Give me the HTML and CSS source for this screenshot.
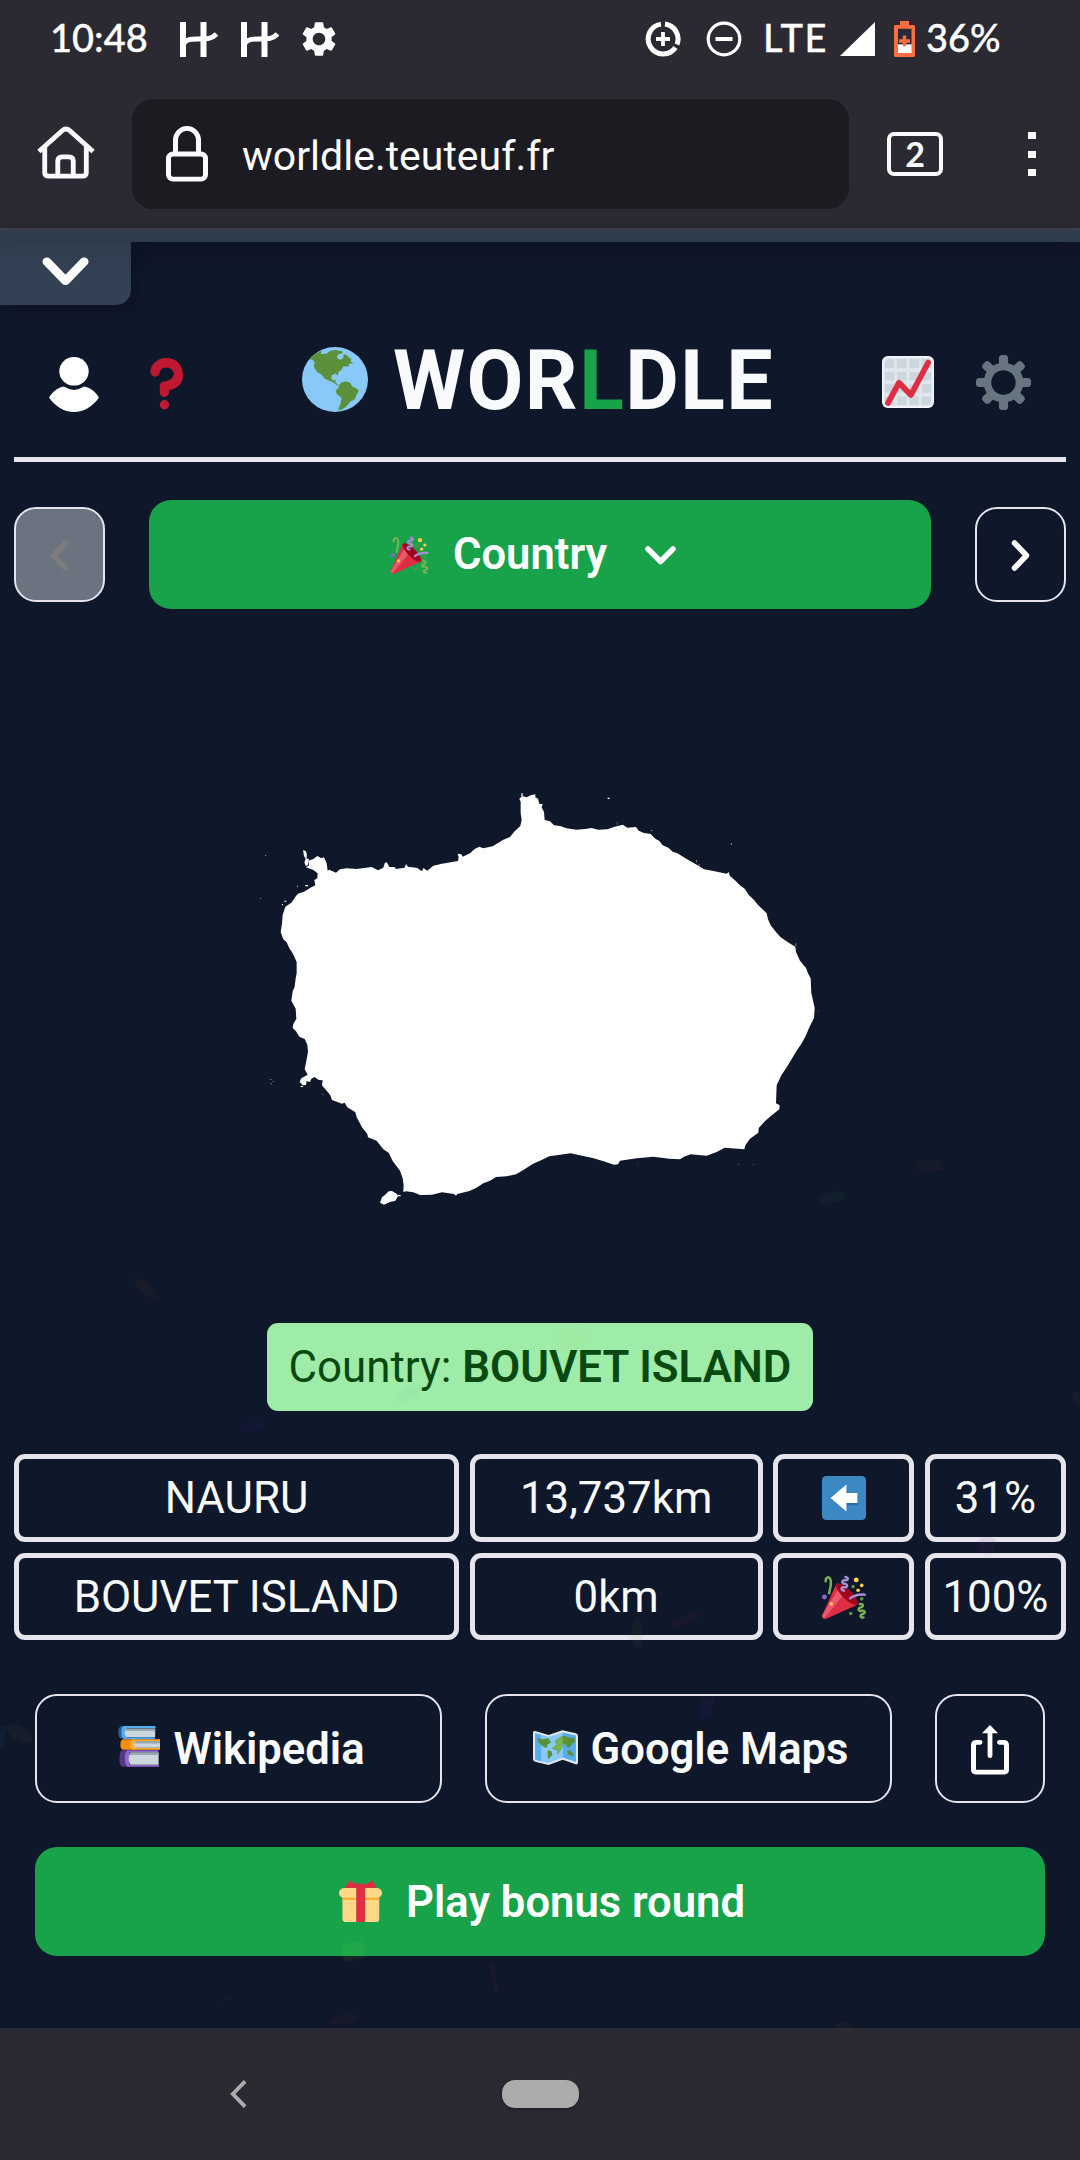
FILE: index.html
```html
<!DOCTYPE html>
<html lang="en">
<head>
<meta charset="utf-8">
<title>Worldle</title>
<link rel="stylesheet" href="styles.css">
</head>
<body>
<svg class="defs" aria-hidden="true">
  <symbol id="party" viewBox="0 0 36 36">
    <path fill="#DD2E44" d="M11.626 7.488c-.112.112-.197.247-.268.395l-.008-.008L.134 33.141l.011.011c-.208.403.14 1.223.853 1.937.713.713 1.533 1.061 1.936.853l.01.01L28.21 24.735l-.008-.009c.147-.07.282-.155.395-.269 1.562-1.562-.971-6.627-5.656-11.313-4.687-4.686-9.752-7.218-11.315-5.656z"/>
    <path fill="#EA596E" d="M13 12L.416 32.506l-.282.635.011.011c-.208.403.14 1.223.853 1.937.232.232.473.408.709.557L17 17l-4-5z"/>
    <path fill="#A0041E" d="M23.012 13.066c4.67 4.672 7.263 9.652 5.789 11.124-1.473 1.474-6.453-1.118-11.126-5.788-4.671-4.672-7.263-9.654-5.79-11.127 1.474-1.473 6.454 1.119 11.127 5.791z"/>
    <path fill="#AA8DD8" d="M18.59 13.609c-.199.161-.459.245-.734.215-.868-.094-1.598-.396-2.109-.873-.541-.505-.808-1.183-.735-1.862.128-1.192 1.324-2.286 3.363-2.066.793.085 1.147-.17 1.159-.292.014-.121-.277-.446-1.07-.532-.868-.094-1.598-.396-2.11-.873-.541-.505-.809-1.183-.735-1.862.13-1.192 1.325-2.286 3.362-2.065.578.062.883-.057 1.012-.134.103-.063.144-.123.148-.158.012-.121-.275-.446-1.07-.532-.549-.06-.947-.552-.886-1.102.059-.549.55-.946 1.101-.886 2.037.219 2.973 1.542 2.844 2.735-.13 1.194-1.325 2.286-3.364 2.067-.578-.063-.88.057-1.01.134-.103.062-.145.123-.149.157-.013.122.276.446 1.071.532 2.037.22 2.973 1.542 2.844 2.735-.129 1.192-1.324 2.286-3.362 2.065-.578-.062-.882.058-1.012.134-.104.064-.144.124-.148.158-.013.121.276.446 1.07.532.548.06.947.553.886 1.102-.028.274-.167.511-.366.671z"/>
    <path fill="#77B255" d="M30.661 22.857c1.973-.557 3.334.323 3.658 1.478.324 1.154-.378 2.615-2.35 3.17-.77.216-1.001.584-.97.701.034.118.425.312 1.193.095 1.972-.555 3.333.325 3.657 1.479.326 1.155-.378 2.614-2.351 3.17-.769.216-1.001.585-.967.702.033.117.423.311 1.192.095.53-.149 1.084.16 1.233.691.148.532-.161 1.084-.693 1.234-1.971.555-3.333-.323-3.659-1.479-.324-1.154.379-2.613 2.353-3.169.77-.217 1.001-.584.967-.702-.032-.117-.422-.312-1.19-.096-1.974.556-3.334-.322-3.659-1.479-.325-1.154.378-2.613 2.351-3.17.768-.215.999-.585.967-.701-.034-.118-.423-.312-1.192-.096-.532.15-1.083-.16-1.233-.691-.149-.53.161-1.082.693-1.232z"/>
    <path fill="#AA8DD8" d="M23.001 20.16c-.294 0-.584-.129-.782-.375-.345-.432-.274-1.061.156-1.406.218-.175 5.418-4.259 12.767-3.208.547.078.927.584.849 1.131-.078.546-.58.93-1.132.848-6.493-.922-11.187 2.754-11.233 2.791-.186.148-.406.219-.625.219z"/>
    <path fill="#77B255" d="M5.754 16c-.095 0-.192-.014-.288-.042-.529-.159-.829-.716-.67-1.245 1.133-3.773 2.16-9.794.898-11.364-.141-.178-.354-.353-.842-.316-.938.072-.849 2.051-.848 2.071.042.551-.372 1.031-.922 1.072-.559.034-1.031-.372-1.072-.923-.103-1.379.326-4.035 2.692-4.214 1.056-.08 1.933.287 2.552 1.057 2.371 2.951-.036 11.506-.542 13.192-.13.433-.528.712-.958.712z"/>
    <circle fill="#5C913B" cx="25.5" cy="9.5" r="1.5"/><circle fill="#9266CC" cx="2" cy="18" r="2"/><circle fill="#5C913B" cx="32.5" cy="19.5" r="1.5"/><circle fill="#5C913B" cx="23.5" cy="31.5" r="1.5"/><circle fill="#FFCC4D" cx="28" cy="4" r="2"/><circle fill="#FFCC4D" cx="32.5" cy="8.5" r="1.5"/><circle fill="#FFCC4D" cx="29.5" cy="12.5" r="1.5"/><circle fill="#FFCC4D" cx="7.5" cy="23.5" r="1.5"/>
  </symbol>
  <symbol id="letter-mark" viewBox="0 0 38 35">
    <path d="M3 0V35M23.500 0V35" fill="none" stroke="#fff" stroke-width="6"/>
    <path d="M3 24C4 18 9 17 18 17C27 17 32 17 36.500 12" fill="none" stroke="#fff" stroke-width="5"/>
  </symbol>
</svg>

<div class="status">
  <div class="status-left">
    <span class="clock">10:48</span>
    <svg class="mark" width="38" height="35"><use href="#letter-mark"/></svg>
    <svg class="mark" width="38" height="35"><use href="#letter-mark"/></svg>
    <svg class="cog" width="42" height="42" viewBox="0 0 24 24"><path fill="#fff" d="M19.140 12.940c.04-.3.06-.61.06-.94 0-.32-.02-.64-.07-.94l2.030-1.580c.18-.14.23-.41.12-.61l-1.920-3.320c-.12-.22-.37-.29-.59-.22l-2.390.96c-.5-.38-1.030-.7-1.620-.94l-.36-2.540c-.04-.24-.24-.41-.48-.41h-3.840c-.24 0-.43.17-.47.41l-.36 2.540c-.59.24-1.130.57-1.620.94l-2.390-.96c-.22-.08-.47 0-.59.22L2.740 8.870c-.12.21-.08.47.12.61l2.030 1.580c-.05.3-.09.63-.09.94s.02.64.07.94l-2.030 1.580c-.18.14-.23.41-.12.61l1.920 3.320c.12.22.37.29.59.22l2.390-.96c.5.38 1.030.7 1.620.94l.36 2.540c.05.24.24.41.48.41h3.840c.24 0 .44-.17.47-.41l.36-2.540c.59-.24 1.130-.56 1.620-.94l2.390.96c.22.08.47 0 .59-.22l1.920-3.320c.12-.22.07-.47-.12-.61l-2.010-1.580zM12 15.600c-1.980 0-3.600-1.620-3.600-3.600s1.620-3.600 3.600-3.600 3.600 1.620 3.600 3.600-1.620 3.600-3.600 3.600z"/></svg>
  </div>
  <div class="status-right">
    <svg class="saver" width="36" height="36" viewBox="0 0 36 36" fill="none" stroke="#fff"><path stroke-width="5" d="M16 3.100A15 15 0 1 0 30.500 26.500M20 3.100A15 15 0 0 1 32 23.500"/><path stroke-width="3.800" d="M18 11v14M11 18h14"/></svg>
    <svg class="dnd" width="36" height="36" viewBox="0 0 36 36" fill="none" stroke="#fff"><circle cx="18" cy="18" r="15.800" stroke-width="3.200"/><path stroke-width="4" d="M9.500 18h17"/></svg>
    <span class="lte">LTE</span>
    <svg class="signal" width="35" height="34" viewBox="0 0 35 34"><path fill="#fff" d="M35 0V34H0z"/></svg>
    <svg class="battery" width="21" height="36" viewBox="0 0 21 37" preserveAspectRatio="none"><path fill="#fff" d="M3 24h15v10H3z"/><path fill="#ff6e40" fill-rule="evenodd" d="M6 0h9v4h4.500a1.500 1.500 0 0 1 1.500 1.500v30a1.500 1.500 0 0 1-1.500 1.500h-18A1.500 1.500 0 0 1 0 35.500v-30A1.500 1.500 0 0 1 1.500 4H6zM4 8v25h13.500V8z"/><path stroke="#ff6e40" stroke-width="3.500" d="M10.500 15v11M5 20.500h11"/></svg>
    <span class="percent">36%</span>
  </div>
</div>

<div class="toolbar">
  <svg class="home" width="58" height="53" viewBox="0 0 60 56" preserveAspectRatio="none" fill="none" stroke="#fbfbfe" stroke-width="5"><path d="M2 27L26 5Q30 1.500 34 5L58 27"/><path d="M8 22V49Q8 53 12 53H47Q51 53 51 49V22"/><path d="M21.500 53V37Q21.500 32.500 26 32.500H33Q37.500 32.500 37.500 37V53"/></svg>
  <div class="url">
    <svg width="42" height="56" viewBox="0 0 42 58" preserveAspectRatio="none" fill="none" stroke="#fbfbfe" stroke-width="5"><rect x="2.500" y="29" width="37" height="26" rx="4.500"/><path d="M9.500 29V15A11.500 12.500 0 0 1 32.500 15V29"/></svg>
    <span>worldle.teuteuf.fr</span>
  </div>
  <div class="tabs">2</div>
  <div class="menu"><i></i><i></i><i></i></div>
</div>

<main class="page">
  <div class="ribbon"></div>
  <div class="drawer">
    <svg width="47" height="29" viewBox="0 0 48 31" preserveAspectRatio="none" fill="none" stroke="#fff" stroke-width="9" stroke-linecap="round" stroke-linejoin="round"><path d="M5 5L24 25.500L43 5"/></svg>
  </div>

  <header class="header">
    <svg class="user" width="50" height="55" viewBox="0 0 50 57" preserveAspectRatio="none" fill="#fff"><ellipse cx="25" cy="14.800" rx="14.700" ry="14.800"/><path d="M15 30.700Q25 37.500 35 30.700C41 31.500 46 36 50 42C43 52 35 57 25 57S7 52 0 42C4 36 9 31.500 15 30.700z"/></svg>
    <svg class="help" width="56" height="56" viewBox="0 0 36 36" fill="#BE1931"><path d="M17 27c-1.657 0-3-1.343-3-3v-4c0-1.657 1.343-3 3-3 .603-.006 6-1 6-5 0-2-2-4-5-4-2.441 0-4 2-4 3 0 1.657-1.343 3-3 3s-3-1.343-3-3c0-4.878 4.580-9 10-9 8 0 11 5.982 11 11 0 4.145-2.277 7.313-6.413 8.920-.9.351-1.790.587-2.587.747V24c0 1.657-1.343 3-3 3z"/><circle cx="17" cy="32" r="3"/></svg>
    <svg class="globe" width="66" height="65" viewBox="880 80 190 196" preserveAspectRatio="none"><ellipse cx="975" cy="178" rx="95" ry="98" fill="#88C9F9"/><g fill="#5C913B"><path d="M898 121L914 103L936 91L934 101L950 100L962 91L975 89L996 93L996 98L983 103Q978 112 986 117Q996 120 999 112L1000 101L1008 104L1015 112L1022 116L1020 124L1028 129L1012 131L1017 138L999 139L993 149L986 154L983 166L976 160L966 165L964 175L970 181L977 179L976 187L986 195L980 195L971 187L957 181L945 175L937 164L925 157L917 146L914 137L917 127L911 119L905 117z"/><path d="M986 195L994 187L1006 184L1018 187L1024 198L1037 205L1044 212L1038 222L1033 237L1018 246L1007 260L993 270L984 269L991 250L994 234L980 222L977 211L985 202z"/></g></svg>
    <h1>WOR<span>L</span>DLE</h1>
    <svg class="chart" width="52" height="52" viewBox="0 0 36 36"><rect width="36" height="36" rx="4" fill="#F5F8FA"/><rect x="1" y="1" width="34" height="34" rx="3" fill="#E1E8ED"/><g fill="#CCD6DD"><path d="M5 2h3.500v6.500H2V5a3 3 0 0 1 3-3zM10.500 2h6.500v6.500h-6.500zM19 2h6.500v6.500H19zM27.500 2H31a3 3 0 0 1 3 3v3.500h-6.500zM2 11h6.500v6H2zM10.500 11h6.500v6h-6.500zM19 11h6.500v6H19zM27.500 11H34v6h-6.500zM2 19.500h6.500v6H2zM10.500 19.500h6.500v6h-6.500zM19 19.500h6.500v6H19zM27.500 19.500H34v6h-6.500zM2 28h6.500v6H5a3 3 0 0 1-3-3zM10.500 28h6.500v6h-6.500zM19 28h6.500v6H19zM27.500 28H34v3a3 3 0 0 1-3 3h-3.500z"/></g><path d="M4.200 32.500L11.800 18.500L20 27L32 4.500" fill="none" stroke="#DD2E44" stroke-width="4" stroke-linecap="round" stroke-linejoin="round"/></svg>
    <svg class="settings" width="55" height="55" viewBox="0 0 36 36"><path fill="#66757F" d="M34 15h-3.362c-.324-1.369-.864-2.651-1.582-3.814l2.379-2.379c.781-.781.781-2.048 0-2.829l-1.414-1.414c-.781-.781-2.047-.781-2.828 0l-2.379 2.379C23.650 6.225 22.369 5.686 21 5.362V2c0-1.104-.896-2-2-2h-2c-1.104 0-2 .896-2 2v3.362c-1.369.324-2.651.864-3.814 1.582L8.808 4.565c-.781-.781-2.048-.781-2.828 0L4.565 5.979c-.781.781-.781 2.048-.001 2.829l2.379 2.379C6.225 12.350 5.686 13.632 5.362 15H2c-1.104 0-2 .896-2 2v2c0 1.104.896 2 2 2h3.362c.324 1.368.864 2.650 1.582 3.813l-2.379 2.379c-.78.78-.78 2.048.001 2.829l1.414 1.414c.78.78 2.047.78 2.828 0l2.379-2.379c1.163.719 2.445 1.258 3.814 1.582V34c0 1.104.896 2 2 2h2c1.104 0 2-.896 2-2v-3.362c1.368-.324 2.650-.864 3.813-1.582l2.379 2.379c.781.781 2.047.781 2.828 0l1.414-1.414c.781-.781.781-2.048 0-2.829l-2.379-2.379c.719-1.163 1.258-2.445 1.582-3.814H34c1.104 0 2-.896 2-2v-2C36 15.896 35.104 15 34 15zM18 26c-4.418 0-8-3.582-8-8s3.582-8 8-8 8 3.582 8 8-3.582 8-8 8z"/></svg>
  </header>

  <nav class="rounds">
    <button class="step disabled"><svg width="19" height="31" viewBox="0 0 19 31" fill="none" stroke="#7c7c7c" stroke-width="5.500" stroke-linecap="round" stroke-linejoin="round"><path d="M15.500 3L3.500 15.500L15.500 28"/></svg></button>
    <button class="current"><svg width="39" height="38"><use href="#party"/></svg><span>Country</span><svg class="caret" width="31" height="19" viewBox="0 0 31 19" fill="none" stroke="#fff" stroke-width="5.500" stroke-linecap="round" stroke-linejoin="round"><path d="M3 3L15.500 15.500L28 3"/></svg></button>
    <button class="step"><svg width="19" height="31" viewBox="0 0 19 31" fill="none" stroke="#fff" stroke-width="5.500" stroke-linecap="round" stroke-linejoin="round"><path d="M3.500 3L15.500 15.500L3.500 28"/></svg></button>
  </nav>

  <svg class="island" width="600" height="460" viewBox="0 0 1800 1380" fill="#fff">
    <path d="M838 86L846 78L860 82L872 76L886 73L886 82L894 86L898 102L908 102L905 112L912 126L914 150L930 154L942 166L960 168L980 175L1010 179L1035 177L1055 174L1075 179L1102 178L1122 171L1148 164L1162 173L1188 171L1196 182L1212 189L1232 192L1246 206L1258 213L1268 226L1286 234L1298 245L1312 250L1340 267L1370 284L1392 298L1420 303L1460 311L1466 306L1470 318L1488 334L1498 344L1514 356L1526 374L1542 390L1554 405L1580 430L1584 448L1592 466L1606 484L1622 502L1646 518L1666 530L1668 546L1680 572L1698 594L1704 610L1712 625L1714 670L1724 713L1722 744L1708 772L1698 796L1686 818L1668 845L1644 886L1624 916L1610 946L1608 1000L1619 1006L1618 1018L1600 1032L1576 1052L1556 1074L1555 1088L1530 1106L1516 1126L1513 1138L1454 1133L1430 1146L1400 1157L1352 1153L1332 1160L1320 1168L1288 1166L1240 1160L1190 1165L1140 1172L1134 1183L1122 1184L1086 1172L1058 1164L1030 1158L992 1150L960 1154L928 1159L900 1172L878 1182L850 1200L828 1213L800 1219L768 1221L750 1232L730 1240L708 1254L688 1263L652 1272L648 1277L642 1272L606 1267L576 1274L540 1275L520 1267L498 1264L490 1266L491 1245L488 1225L480 1202L458 1173L446 1148L430 1138L410 1112L384 1102L382 1092L366 1072L350 1042L346 1027L322 1012L314 998L306 1001L276 990L270 974L256 958L246 946L248 931L236 930L224 921L214 926L210 936L200 933L198 945L188 946L179 935L184 925L203 914L194 898L200 868L204 845L202 824L194 807L178 800L168 784L158 774L160 762L169 746L167 716L154 692L158 664L164 650L167 625L170 610L170 576L158 550L148 535L140 517L130 508L122 486L126 460L128 435L136 410L154 398L168 378L174 371L192 365L214 352L226 346L223 330L232 325L233 310L220 300L198 292L207 286L205 272L220 267L232 258L244 265L252 262L260 280L263 302L268 299L288 308L300 298L320 295L350 297L395 291L414 301L430 293L434 280L440 276L448 291L464 291L468 297L494 293L498 282L504 290L532 294L546 304L550 294L562 302L580 287L606 281L654 273L656 262L653 251L664 253L668 260L690 250L704 237L718 230L730 235L758 229L790 209L810 201L824 184L841 168L845 150L842 130L842 95z"/>
    <path d="M189 241L196 242L200 249L200 266L207 266L203 286L198 288L193 278L197 266L192 258zM420 1298L426 1282L438 1272L446 1264L456 1263L472 1273L474 1279L466 1292L450 1296L432 1304zM474 1275h8v4h-8zM844 70h4v8h-4zM182 948h7v3h-7zM133 392h6v3h-6zM126 402h3v4h-3zM196 345h8v4h-8zM1103 83h6v4h-6z"/>
    <path opacity=".5" d="M75 255h3v3h-3zM60 384h3v3h-3zM90 928h5v2h-5zM97 933h4v2h-4zM92 940h4v3h-4zM171 346h3v6h-3zM248 971h3v3h-3zM1472 220h4v4h-4zM1233 180h4v4h-4zM1368 271h3v6h-3zM1376 282h3v5h-3zM1666 520h3v8h-3z"/>
    <path opacity=".3" d="M1130 155h3v9h-3zM1733 722h3v3h-3zM1494 1182h3v3h-3zM1539 1182h3v3h-3zM1192 1179h2v3h-2z"/>
  </svg>

  <p class="answer">Country: <b>BOUVET ISLAND</b></p>

  <div class="guesses">
    <div>NAURU</div><div>13,737km</div>
    <div><svg width="44" height="44" viewBox="0 0 36 36"><rect width="36" height="36" rx="3.500" fill="#3B88C3"/><path fill="#2b6ea3" d="M20 8v20l1-4h8.500V14H21z"/><path fill="#fff" d="M20 7v7h9v8h-9v7L7 18z"/></svg></div>
    <div>31%</div>
    <div>BOUVET ISLAND</div><div>0km</div>
    <div><svg width="44" height="44"><use href="#party"/></svg></div>
    <div class="full">100%</div>
  </div>

  <div class="links">
    <button class="outline wiki"><svg width="42" height="41" viewBox="0 0 122 124" preserveAspectRatio="none"><path fill="#226699" d="M10 0H22V38H10Q1 36 1 19T10 0z"/><path fill="#55ACEE" d="M18 0H109V7H25V34H107V39H18Q10 37 10 19T18 0z"/><path fill="#CCD6DD" d="M24 8H108V33H24Q15 20 24 8z"/><path fill="#99AAB5" d="M24 8H108V15H22z"/><path fill="#F4900C" d="M14 40H50V72H14Q7 69 7 56T14 40z"/><path fill="#FFAC33" d="M43 40H122V47H50V66H122V72H43Q35 68 35 56T43 40z"/><path fill="#CCD6DD" d="M50 47H122V66H50Q42 56 50 47z"/><path fill="#99AAB5" d="M50 47H122V53H48z"/><path fill="#553788" d="M12 73H34V123H12Q4 119 4 98T12 73z"/><path fill="#9266CC" d="M27 73H117V79H33V118H119V123H28Q20 117 20 98T27 73z"/><path fill="#CCD6DD" d="M36 80H118V117H36Q26 98 36 80z"/><path fill="#99AAB5" d="M36 80H118V88H34z"/></svg><span>Wikipedia</span></button>
    <button class="outline maps"><svg width="45" height="35" viewBox="0 0 130 107" preserveAspectRatio="none"><path fill="#E1E8ED" d="M6 3L45 15L85 1L124 10Q130 12 130 18V99Q130 106 123 105L86 91L45 107L6 97Q0 95 0 89V8Q0 2 6 3z"/><path fill="#55ACEE" d="M6 9L25 15V96L6 91z"/><path fill="#88C9F9" d="M25 15L45 21V101L25 96zM45 21L86 8V84L45 101z"/><path fill="#55ACEE" d="M86 8L124 17V98L86 84z"/><path fill="#5C913B" d="M11 24L25 28L45 25L52 38L42 44L40 55L31 52L22 44L14 35zM44 61L54 66L56 76L47 87H43L42 68zM56 55L67 46L64 33L75 25L86 17L106 23L121 25V37L111 44L105 55L98 51L94 43L86 45L78 65L72 75L69 62L57 58zM98 65L106 61L117 73V81L101 75z"/><path fill="#77B255" d="M56 56L67 46L64 33L86 17V48L78 65L72 75L69 60z"/></svg><span>Google Maps</span></button>
    <button class="outline share"><svg width="38" height="50" viewBox="0 0 38 52" preserveAspectRatio="none"><path d="M9 18H5.500Q2.500 18 2.500 21V46.500Q2.500 49 5.500 49H32.500Q35.500 49 35.500 46.500V21Q35.500 18 32.500 18H28.500" fill="none" stroke="#fff" stroke-width="5" stroke-linecap="round"/><path d="M19 6V32" fill="none" stroke="#fff" stroke-width="4.800" stroke-linecap="round"/><path fill="#fff" d="M19 0L27 8.500H11z"/></svg></button>
  </div>
  <button class="bonus"><svg width="43" height="41" viewBox="0 0 125 123" preserveAspectRatio="none"><path fill="#FDD888" d="M10 48H117V113Q117 123 107 123H20Q10 123 10 113z"/><path fill="#FFAC33" d="M10 46H117V57H10z"/><path fill="#FDD888" d="M13 21H112Q125 24 125 36T112 50H13Q0 48 0 36T13 21z"/><path fill="#DD2E44" d="M50 8H76V123H50z"/><path fill="#DD2E44" d="M17 21L29 0Q34 -2 51 12Q62 6 75 12L95 0Q101 -1 109 21z"/></svg><span>Play bonus round</span></button>

  <svg class="confetti" width="1080" height="1797" viewBox="0 231 1080 1797">
    <path fill="#2e8a3a" fill-opacity=".07" d="M818 1195L843 1190L846 1200L821 1206z"/>
    <path fill="#a05a2a" fill-opacity=".06" d="M914 1161L939 1159L944 1170L919 1173z"/>
    <path fill="#a05a2a" fill-opacity=".07" d="M133 1278C147 1277 156 1287 159 1300C145 1299 137 1290 133 1278z"/>
    <ellipse cx="251" cy="1427" rx="14" ry="6" fill="#4a2ac8" fill-opacity=".06" transform="rotate(-10 251 1427)"/>
    <ellipse cx="410" cy="1393" rx="14" ry="6" fill="#50b4c8" fill-opacity=".07" transform="rotate(-28 410 1393)"/>
    <path fill="#e0b040" fill-opacity=".05" d="M559 1331L584 1329L583 1348L561 1351z"/>
    <path fill="#a0a030" fill-opacity=".06" d="M1070 1393L1080 1391V1409z"/>
    <ellipse cx="987" cy="1545" rx="9" ry="10" fill="#7a20a0" fill-opacity=".09"/>
    <path fill="#a03030" fill-opacity=".07" d="M673 1621L699 1611V1619L672 1629z"/>
    <ellipse cx="637" cy="1633" rx="6" ry="15" fill="#508c30" fill-opacity=".07"/>
    <path fill="#1478c8" fill-opacity=".09" d="M0 1727L6 1727L3 1747L0 1751z"/>
    <ellipse cx="20" cy="1734" rx="15" ry="7" fill="#a08030" fill-opacity=".06" transform="rotate(30 20 1734)"/>
    <path fill="#5a28c8" fill-opacity=".07" d="M702 1698L716 1696L711 1715L698 1721z"/>
    <path fill="#80e040" fill-opacity=".08" d="M341 1944L363 1941L365 1958L344 1962z"/>
    <path fill="#c03060" fill-opacity=".06" d="M489 1962L495 1966L499 1993L494 1990z"/>
    <path fill="#14a0c8" fill-opacity=".06" d="M210 2004L240 1992L226 2001z"/>
    <path fill="#c04040" fill-opacity=".06" d="M337 2015L360 2014L352 2024H327z"/>
    <path fill="#c06040" fill-opacity=".06" d="M832 2028Q843 2016 855 2028z"/>
  </svg>
</main>

<footer class="system">
  <svg width="17" height="28" viewBox="0 0 18 29" preserveAspectRatio="none" fill="none" stroke="#acacac" stroke-width="4"><path d="M16 1.500L3 14.500L16 27.500"/></svg>
  <i class="pill"></i>
</footer>
</body>
</html>
```
FILE: styles.css
```css
* { box-sizing: border-box; }
body {
  margin: 0;
  width: 1080px;
  height: 2160px;
  overflow: hidden;
  display: flex;
  flex-direction: column;
  background: #2b2a33;
  color: #f8fafc;
  font-family: Roboto, "Liberation Sans", sans-serif;
  font-size: 43.800px;
}
svg { display: block; flex: none; }
.defs { position: absolute; width: 0; height: 0; }
button {
  margin: 0;
  padding: 0;
  display: flex;
  align-items: center;
  justify-content: center;
  border: 0;
  border-radius: 22px;
  background: none;
  color: #fff;
  font: 600 43.600px/1 Roboto, "Liberation Sans", sans-serif;
  white-space: nowrap;
}

/* phone status bar */
.status {
  flex: none;
  height: 78px;
  padding: 0 80px 0 50px;
  display: flex;
  justify-content: space-between;
  color: #fff;
  font: 500 38px/74px Lato, "Liberation Sans", sans-serif;
  -webkit-text-stroke: .3px #fff;
}
.status-left, .status-right { height: 78px; display: flex; align-items: center; }
.status span { height: 78px; }
.clock { width: 130px; }
.mark { margin-right: 23px; }
.cog { margin-left: -4px; }
.saver { margin-right: 25px; }
.dnd { margin-right: 21px; }
.lte { width: 77px; letter-spacing: 1.500px; }
.signal { margin-right: 19px; }
.battery { margin-right: 11px; }
.percent { width: 74px; }

/* browser toolbar */
.toolbar {
  flex: none;
  height: 153px;
  padding: 21px 44px 0 37px;
  display: flex;
  align-items: flex-start;
  border-bottom: 3px solid #464450;
}
.home { margin: 27px 37px 0 0; }
.url {
  width: 717px;
  height: 110px;
  padding-left: 34px;
  display: flex;
  align-items: center;
  gap: 34px;
  border-radius: 21px;
  background: #1c1b22;
  color: #fbfbfe;
  font-size: 41px;
}
.url span { padding-top: 3px; }
.tabs {
  width: 56px;
  height: 44px;
  margin: 33px 0 0 38px;
  border: 4px solid #fbfbfe;
  border-radius: 7px;
  font: 700 34px/36px Lato, sans-serif;
  text-align: center;
}
.menu {
  height: 44px;
  margin: 33px 0 0 auto;
  display: flex;
  flex-direction: column;
  justify-content: space-between;
}
.menu i { width: 8px; height: 7px; background: #fbfbfe; }

/* game page */
.page {
  flex: none;
  position: relative;
  height: 1797px;
  display: flex;
  flex-direction: column;
  background: #0f172a;
}
.ribbon { height: 11px; background: #2f3c4d; box-shadow: 0 8px 20px #0e1022; }
.drawer {
  position: relative;
  width: 131px;
  height: 63px;
  display: flex;
  justify-content: center;
  padding-top: 15px;
  border-radius: 0 0 15px 0;
  background: linear-gradient(#2f3c4d, #334155 50%);
  box-shadow: 6px 8px 12px -2px #0e1226;
}
.header {
  height: 157px;
  margin: 0 14px;
  padding: 0 35px;
  display: flex;
  align-items: center;
  border-bottom: 5px solid #e5e5eb;
}
.user { margin: 7px 39px 0 0; }
.help { margin: 3px 108px 0 0; }
.globe { margin: -3px 25px 0 0; }
h1 {
  margin: 0;
  width: 490px;
  font-size: 82.500px;
  line-height: 1;
  font-weight: 700;
  letter-spacing: 1.400px;
}
h1 span { color: #16a34a; }
.chart { margin: 2px 42px 0 0; }
.settings { margin-top: 2px; }

.rounds {
  height: 109px;
  margin: 38px 14px 0;
  display: flex;
  align-items: center;
  justify-content: space-between;
}
.step { width: 91px; height: 95px; padding-top: 2px; border: 2px solid #e5e5eb; }
.disabled { background: #6b7280; }
.current { width: 782px; height: 109px; padding-right: 14px; background: #18a34a; }
.current span { margin-left: 24px; }
.caret { margin: 2px 0 0 38px; }

.island { margin: 161px 0 0 240px; }

.answer {
  width: 546px;
  height: 88px;
  margin: 93px auto 0;
  border-radius: 11px;
  background: #9eeca7;
  color: #0a4812;
  line-height: 88px;
  text-align: center;
  white-space: nowrap;
}
.answer b { font-weight: 600; }

.guesses {
  margin: 43px 14px 0;
  display: grid;
  grid-template-columns: 445px 293px 141px 141px;
  grid-template-rows: 88px 87px;
  gap: 11px 10.667px;
}
.guesses div {
  display: flex;
  align-items: center;
  justify-content: center;
  border: 5px solid #e5e5eb;
  border-radius: 11px;
  white-space: nowrap;
}

.links { margin: 54px 35px 0; display: flex; justify-content: space-between; }
.outline { width: 407px; height: 109px; border: 2px solid #e5e5eb; color: #f8fafc; }
.outline span { margin: 2px 0 0 13px; }
.wiki { padding-left: 6px; }
.wiki svg { margin-top: -4px; }
.maps { padding-left: 4px; }
.maps svg { margin-top: -2px; }
.share { width: 110px; padding-top: 2px; }
.bonus { height: 109px; margin: 44px 35px 0; padding-left: 4px; background: #18a34a; }
.bonus span { margin: 2px 0 0 24px; }

.confetti { position: absolute; left: 0; top: 0; filter: blur(1px); pointer-events: none; }

/* system navigation */
.system { flex: none; height: 132px; padding-left: 230px; display: flex; align-items: center; }
.pill {
  width: 77px;
  height: 28px;
  margin-left: 255px;
  border-radius: 13px;
  background: #acacac;
  box-shadow: 0 1px 3px #1b1b20;
}
```
